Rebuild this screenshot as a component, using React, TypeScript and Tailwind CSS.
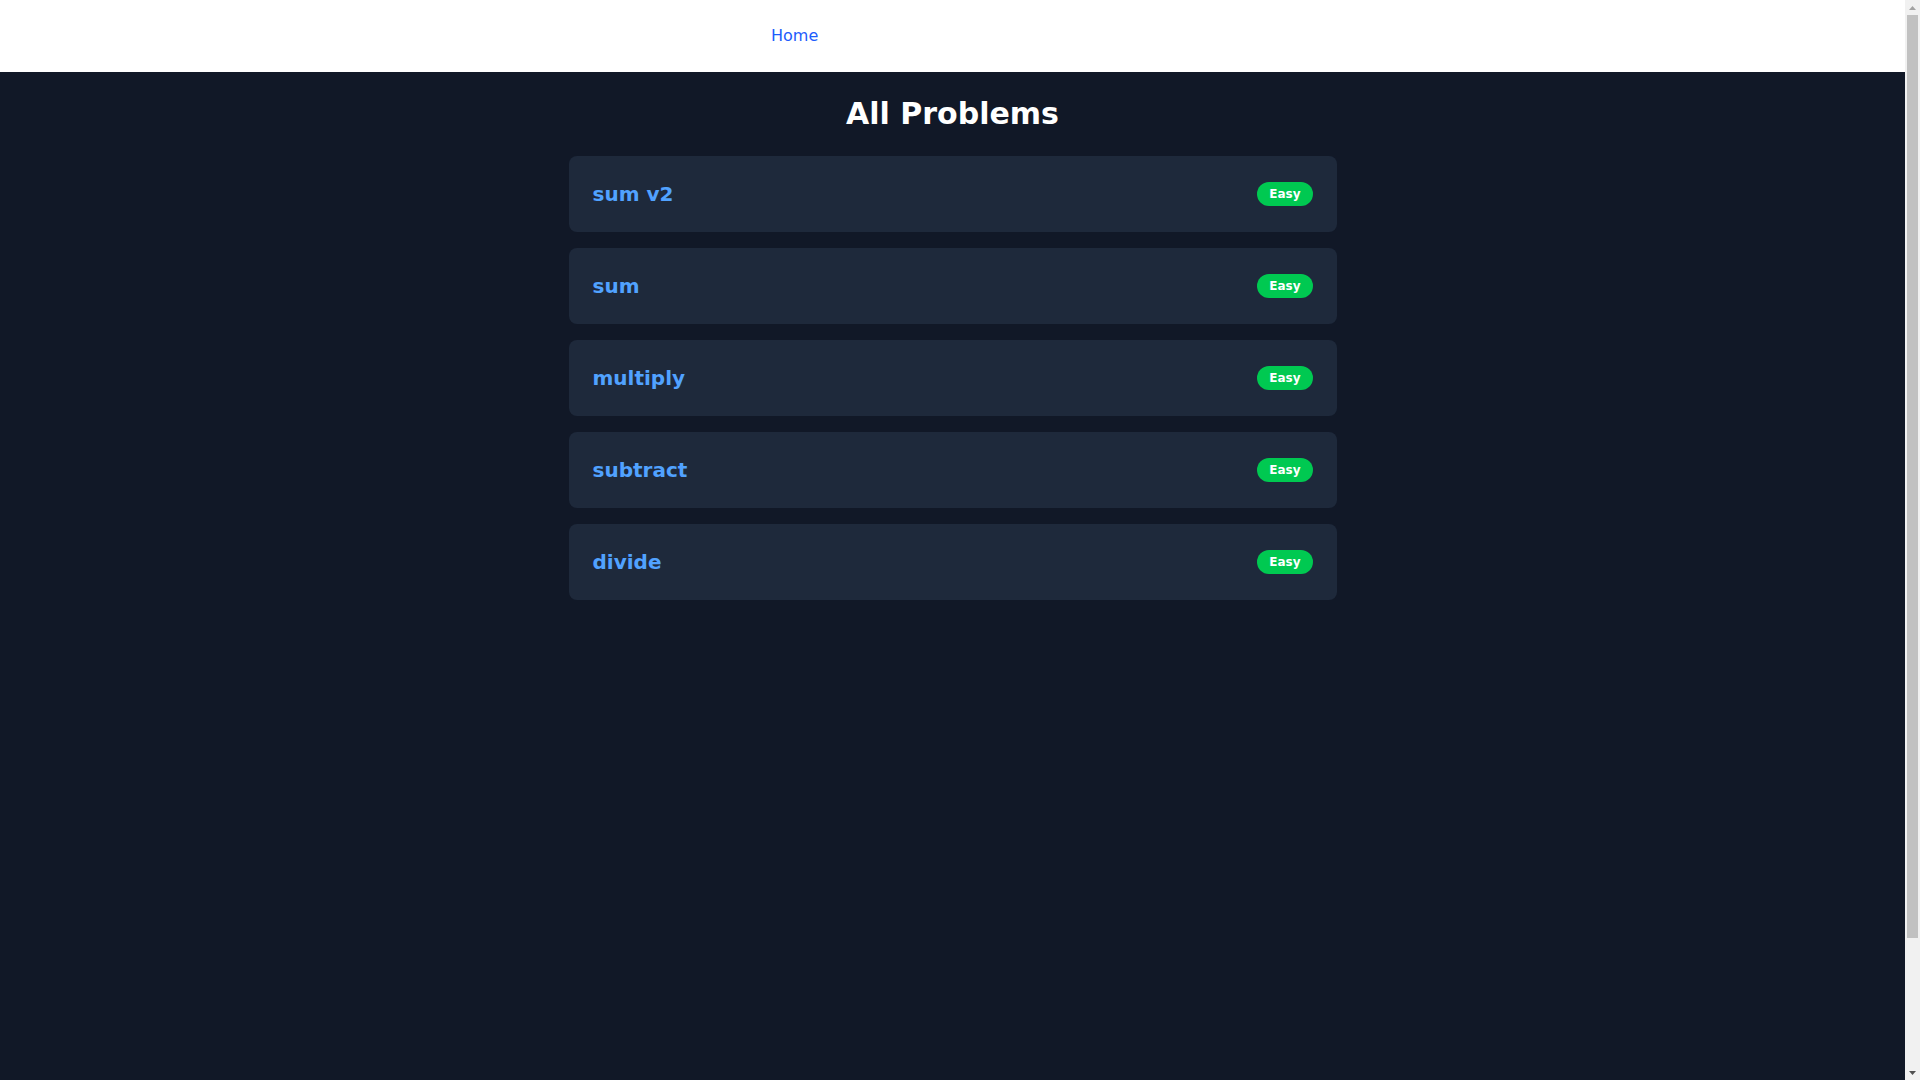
import React from "react";

const problems = ["sum v2", "sum", "multiply", "subtract", "divide"];

function Scrollbar() {
  return (
    <div className="w-[15px] h-screen shrink-0 bg-[#f1f1f1] flex flex-col">
      <div className="h-[15px] flex items-center justify-center">
        <svg width="7" height="4" viewBox="0 0 7 4">
          <polygon points="0,4 7,4 3.5,0" fill="#a3a3a3" />
        </svg>
      </div>
      <div className="flex-1 flex flex-col px-[2px]">
        <div className="h-[923px] bg-[#c1c1c1]" />
      </div>
      <div className="h-[15px] flex items-center justify-center">
        <svg width="7" height="4" viewBox="0 0 7 4">
          <polygon points="0,0 7,0 3.5,4" fill="#505050" />
        </svg>
      </div>
    </div>
  );
}

export default function App() {
  return (
    <div className="h-screen flex overflow-hidden font-['DejaVu_Sans',sans-serif]">
      <div className="flex-1 min-w-0 h-screen overflow-hidden">
        <nav className="h-[72px] bg-white flex items-center">
          <a href="#" className="ml-[771px] text-base text-[#1d5cfc]">
            Home
          </a>
        </nav>
        <main className="min-h-[1156px] bg-[#111827] py-6">
          <div className="max-w-3xl mx-auto">
            <h1 className="text-3xl font-bold text-white text-center mb-6">All Problems</h1>
            <div className="flex flex-col gap-4">
              {problems.map((p) => (
                <div
                  key={p}
                  className="bg-[#1e293b] rounded-lg p-6 flex items-center justify-between"
                >
                  <span className="text-xl font-bold text-[#51a2ff]">{p}</span>
                  <span className="px-3 py-1 rounded-full bg-[#00c951] text-white text-xs font-bold">
                    Easy
                  </span>
                </div>
              ))}
            </div>
          </div>
        </main>
      </div>
      <Scrollbar />
    </div>
  );
}
